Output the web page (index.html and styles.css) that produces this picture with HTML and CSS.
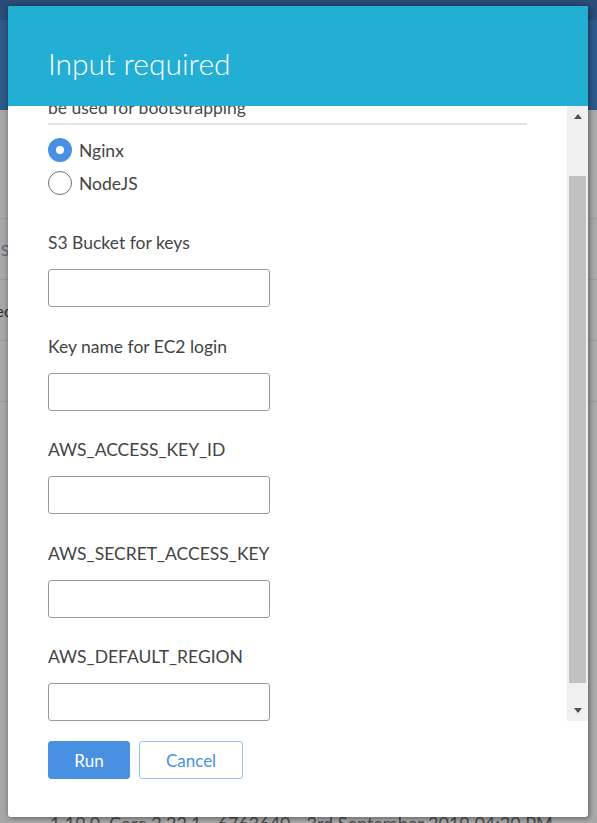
FILE: index.html
```html
<!DOCTYPE html>
<html>
<head>
<meta charset="utf-8">
<link rel="stylesheet" href="styles.css">
</head>
<body>
<div class="page">
  <div class="page-top"><div class="page-top-strip"></div></div>
  <div class="page-rows">
    <div class="page-row"></div>
    <div class="page-row"><span class="page-cell muted">USE</span></div>
    <div class="page-row"><span class="page-cell">Spec</span></div>
    <div class="page-row"></div>
  </div>
  <div class="page-version">1.19.0, Core 2.22.1 - 6763640 - 3rd September 2019 04:20 PM</div>
</div>

<div class="modal">
  <div class="modal-header"><h1 class="modal-title">Input required</h1></div>
  <div class="modal-body">
    <div class="scroll">
      <div class="scroll-inner">
        <p class="desc">be used for bootstrapping</p>
        <div class="radios">
          <label class="radio"><span class="radio-dot checked"></span>Nginx</label>
          <label class="radio"><span class="radio-dot"></span>NodeJS</label>
        </div>
        <div class="fields">
          <div class="field"><label class="field-label">S3 Bucket for keys</label><input class="field-input" type="text"></div>
          <div class="field"><label class="field-label">Key name for EC2 login</label><input class="field-input" type="text"></div>
          <div class="field"><label class="field-label">AWS_ACCESS_KEY_ID</label><input class="field-input" type="text"></div>
          <div class="field"><label class="field-label">AWS_SECRET_ACCESS_KEY</label><input class="field-input" type="text"></div>
          <div class="field"><label class="field-label">AWS_DEFAULT_REGION</label><input class="field-input" type="text"></div>
        </div>
      </div>
    </div>
    <div class="scrollbar">
      <div class="sb-btn"><span class="arrow-up"></span></div>
      <div class="sb-track"><div class="sb-thumb"></div></div>
      <div class="sb-btn"><span class="arrow-down"></span></div>
    </div>
  </div>
  <div class="modal-footer">
    <button class="btn btn-primary">Run</button>
    <button class="btn btn-secondary">Cancel</button>
  </div>
</div>
</body>
</html>
```

FILE: styles.css
```css
* { box-sizing: border-box; }
html, body { margin: 0; padding: 0; }
body {
  width: 597px;
  height: 823px;
  overflow: hidden;
  background: #a8a8a8;
  font-family: Lato, "Open Sans", sans-serif;
  position: relative;
}

/* dimmed page behind the dialog */
.page { width: 597px; height: 823px; display: flex; flex-direction: column; }
.page-top { height: 110px; background: #2e5a8c; }
.page-top-strip { height: 20px; background: #2a4c78; }
.page-rows { margin-top: 48px; }
.page-row {
  height: 61px;
  border-bottom: 1px solid #9c9c9c;
  display: flex;
  align-items: center;
}
.page-cell { margin-left: -22px; font-size: 16px; color: #2e2e2e; }
.page-cell.muted { color: #5e6b7c; margin-left: -11px; }
.page-version {
  margin-top: auto;
  margin-left: 50px;
  margin-bottom: -12px;
  font-size: 18px;
  color: #4a4a4a;
  line-height: 24px;
}

/* dialog */
.modal {
  position: absolute;
  left: 8px;
  top: 6px;
  width: 580px;
  height: 811px;
  background: #fff;
  border-radius: 3px;
  box-shadow: 0 0 6px rgba(0, 0, 0, 0.3), 2px 2px 4px rgba(0, 0, 0, 0.2);
  display: flex;
  flex-direction: column;
  overflow: hidden;
}
.modal-header {
  height: 100px;
  flex: none;
  background: #23aed4;
  padding: 39px 40px 0;
}
.modal-title {
  margin: 0;
  font-size: 30px;
  line-height: 36px;
  font-weight: 300;
  color: #fff;
}

.modal-body {
  height: 615px;
  flex: none;
  display: flex;
}
.scroll { flex: 1; overflow: hidden; }
.scroll-inner { padding: 0 40px; }

.desc {
  margin: -10px 0 0;
  font-size: 17.5px;
  line-height: 24px;
  color: #4a4a4a;
  padding-bottom: 3px;
  border-bottom: 2px solid #e3e3e3;
}

.radios {
  margin-top: 13px;
  display: flex;
  flex-direction: column;
  gap: 9px;
}
.radio {
  display: flex;
  align-items: center;
  gap: 7px;
  height: 24px;
  font-size: 17.5px;
  color: #444;
}
.radio-dot {
  width: 24px;
  height: 24px;
  border-radius: 50%;
  border: 1.5px solid #6f6f6f;
  background: #fff;
  flex: none;
}
.radio-dot.checked {
  border: 8px solid #4a90e2;
  background: #fff;
}

.fields {
  margin-top: 36px;
  display: flex;
  flex-direction: column;
  gap: 27.5px;
}
.field { display: flex; flex-direction: column; gap: 14px; }
.field-label {
  font-size: 17.5px;
  line-height: 24px;
  color: #444;
}
.field-input {
  width: 222px;
  height: 38px;
  border: 1px solid #9a9a9a;
  border-radius: 3px;
  background: #fff;
  font: inherit;
  padding: 0 8px;
}

/* scrollbar */
.scrollbar {
  width: 21px;
  flex: none;
  background: #f0f0f0;
  display: flex;
  flex-direction: column;
}
.sb-btn {
  height: 21px;
  display: flex;
  align-items: center;
  justify-content: center;
}
.arrow-up {
  width: 0; height: 0;
  border-left: 4.5px solid transparent;
  border-right: 4.5px solid transparent;
  border-bottom: 5px solid #505050;
}
.arrow-down {
  width: 0; height: 0;
  border-left: 4.5px solid transparent;
  border-right: 4.5px solid transparent;
  border-top: 5px solid #505050;
}
.sb-track { flex: 1; padding: 49px 2px 0; }
.sb-thumb { height: 507px; background: #c1c1c1; }

/* footer */
.modal-footer {
  flex: 1;
  padding: 20px 40px 0;
  display: flex;
  gap: 9px;
  align-items: flex-start;
}
.btn {
  height: 38px;
  border-radius: 3px;
  font-family: Lato, "Open Sans", sans-serif;
  font-size: 17px;
  cursor: pointer;
}
.btn-primary {
  width: 82px;
  background: #4a90e2;
  border: 1px solid #4a90e2;
  color: #fff;
}
.btn-secondary {
  width: 104px;
  background: #fff;
  border: 1px solid #9cc1ef;
  color: #4a90e2;
}
```
